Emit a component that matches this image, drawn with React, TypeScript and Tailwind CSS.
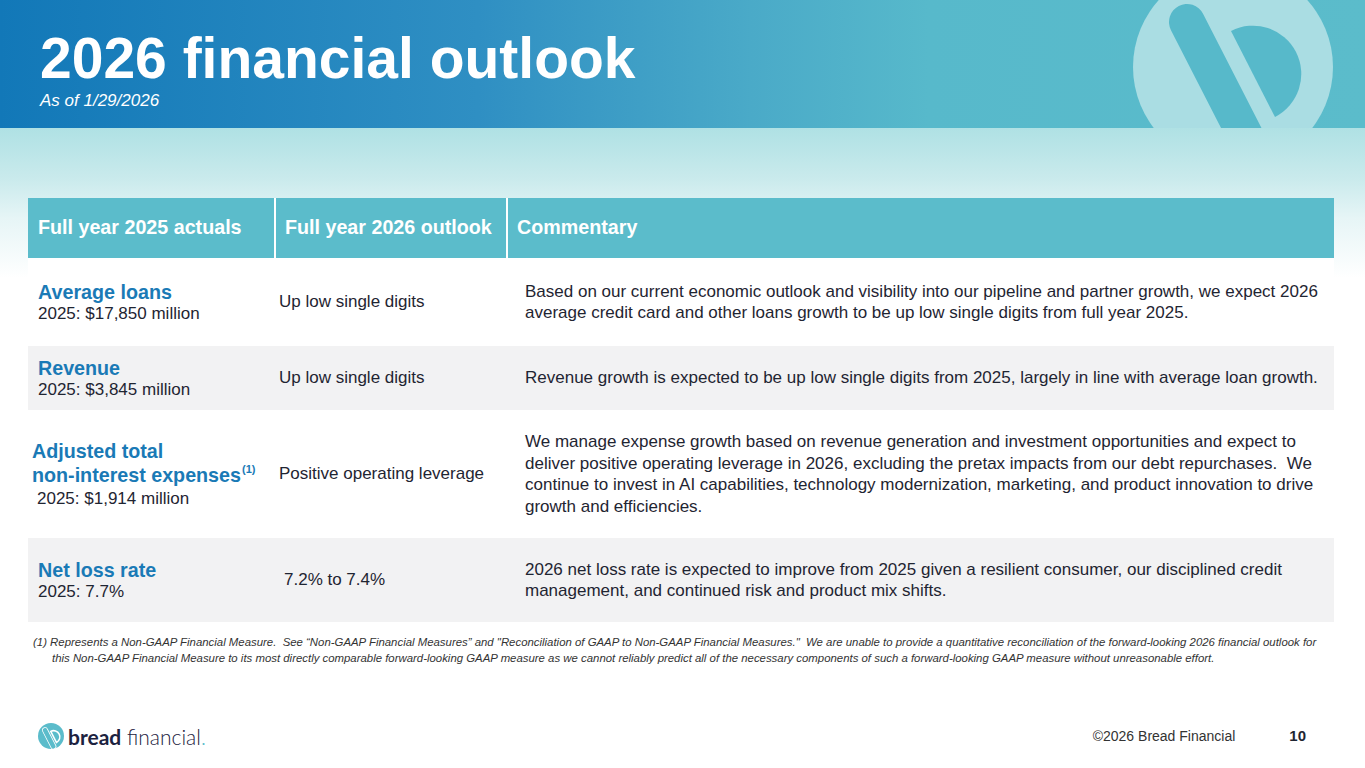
import React from "react";

const FONT = "font-['Liberation_Sans',Arial,sans-serif]";

function BreadMark({
  circle,
  shape,
  outline,
  className,
}: {
  circle: string;
  shape: string;
  outline?: string;
  className?: string;
}) {
  return (
    <svg viewBox="0 0 200 200" className={className}>
      <circle cx="100" cy="100" r="100" fill={circle} />
      <line
        x1="54"
        y1="55"
        x2="118"
        y2="180"
        stroke={outline ?? shape}
        strokeWidth={outline ? 46 : 36}
        strokeLinecap="round"
      />
      {outline && (
        <line
          x1="54"
          y1="55"
          x2="118"
          y2="180"
          stroke={shape}
          strokeWidth="34"
          strokeLinecap="round"
        />
      )}
      <path
        d="M 98 64 A 48 48 0 0 1 142 150 Z"
        fill={shape}
        stroke={outline ?? "none"}
        strokeWidth={outline ? 12 : 0}
      />
    </svg>
  );
}

type Row = {
  title: React.ReactNode;
  value: string;
  outlook: string;
  commentary: React.ReactNode;
  height: string;
  bg: string;
  titleIndent?: string;
  valueIndent?: string;
  outlookIndent?: string;
};

const rows: Row[] = [
  {
    title: "Average loans",
    value: "2025: $17,850 million",
    outlook: "Up low single digits",
    commentary: (
      <>
        Based on our current economic outlook and visibility into our pipeline and partner growth, we expect 2026
        <br />
        average credit card and other loans growth to be up low single digits from full year 2025.
      </>
    ),
    height: "h-[88px]",
    bg: "bg-white",
  },
  {
    title: "Revenue",
    value: "2025: $3,845 million",
    outlook: "Up low single digits",
    commentary: (
      <>
        Revenue growth is expected to be up low single digits from 2025, largely in line with average loan growth.
      </>
    ),
    height: "h-[64px]",
    bg: "bg-[#f2f2f3]",
  },
  {
    title: (
      <>
        Adjusted total
        <br />
        non-interest expenses
        <sup className="text-[11px] font-bold align-[4px] ml-[1px]">(1)</sup>
      </>
    ),
    value: "2025: $1,914 million",
    outlook: "Positive operating leverage",
    commentary: (
      <>
        We manage expense growth based on revenue generation and investment opportunities and expect to
        <br />
        deliver positive operating leverage in 2026, excluding the pretax impacts from our debt repurchases.&nbsp; We
        <br />
        continue to invest in AI capabilities, technology modernization, marketing, and product innovation to drive
        <br />
        growth and efficiencies.
      </>
    ),
    height: "h-[128px]",
    bg: "bg-white",
    titleIndent: "ml-[-6px] leading-[24px]",
    valueIndent: "ml-[-1px] mt-[1px]",
  },
  {
    title: "Net loss rate",
    value: "2025: 7.7%",
    outlook: "7.2% to 7.4%",
    commentary: (
      <>
        2026 net loss rate is expected to improve from 2025 given a resilient consumer, our disciplined credit
        <br />
        management, and continued risk and product mix shifts.
      </>
    ),
    height: "h-[84px]",
    bg: "bg-[#f2f2f3]",
    outlookIndent: "pl-[8px]",
  },
];

export default function App() {
  return (
    <div className={`relative w-[1365px] h-[768px] overflow-hidden bg-white ${FONT}`}>
      {/* Title band */}
      <header className="relative h-[128px] overflow-hidden bg-[linear-gradient(90deg,#1278b8_0%,#2f8fc3_35%,#4aaac8_55%,#57b9cb_68%,#5bbccb_100%)] pl-[40px] pt-[30px] text-white">
        <h1 className="text-[57px] leading-[57px] font-bold">2026 financial outlook</h1>
        <p className="mt-[4px] text-[17px] leading-[20px] italic">As of 1/29/2026</p>
        <BreadMark
          circle="#aadde3"
          shape="#57b9ca"
          className="absolute left-[1133px] top-[-33px] w-[200px] h-[200px]"
        />
      </header>

      {/* Table area */}
      <section className="bg-[linear-gradient(180deg,#afe1e4_0px,#c9eaec_50px,#e6f5f6_90px,#ffffff_150px)] pt-[70px] pl-[28px] pr-[31px]">
        <div className="flex h-[60px] bg-[#5bbccb] text-white text-[19.7px] font-bold">
          <div className="w-[248px] flex items-center pl-[10px] border-r-2 border-white">Full year 2025 actuals</div>
          <div className="w-[232px] flex items-center pl-[9px] border-r-2 border-white">Full year 2026 outlook</div>
          <div className="flex-1 flex items-center pl-[9px]">Commentary</div>
        </div>

        {rows.map((r, i) => (
          <div key={i} className={`flex ${r.height} ${r.bg} text-[#1f2532] text-[17px]`}>
            <div className="w-[248px] flex flex-col justify-center pl-[10px]">
              <div className={`text-[#1a7ab6] font-bold text-[19.7px] leading-[22px] ${r.titleIndent ?? ""}`}>
                {r.title}
              </div>
              <div className={`leading-[21px] ${r.valueIndent ?? ""}`}>{r.value}</div>
            </div>
            <div className={`w-[232px] flex items-center pl-[3px] ${r.outlookIndent ?? ""}`}>{r.outlook}</div>
            <div className="flex-1 flex items-center pl-[17px] leading-[21.5px] whitespace-nowrap">
              <div>{r.commentary}</div>
            </div>
          </div>
        ))}
      </section>

      {/* Footnote */}
      <div className="pl-[33px] pt-[12px] text-[11.4px] leading-[16px] italic text-[#333] whitespace-nowrap">
        (1) Represents a Non-GAAP Financial Measure.&nbsp; See “Non-GAAP Financial Measures” and "Reconciliation of GAAP to Non-GAAP Financial Measures."&nbsp; We are unable to provide a quantitative reconciliation of the forward-looking 2026 financial outlook for
        <br />
        <span className="pl-[19px]">
          this Non-GAAP Financial Measure to its most directly comparable forward-looking GAAP measure as we cannot reliably predict all of the necessary components of such a forward-looking GAAP measure without unreasonable effort.
        </span>
      </div>

      {/* Footer */}
      <footer className="absolute left-0 right-0 top-[720px] h-[32px] flex items-center pl-[38px] pr-[59px]">
        <div className="flex items-center gap-[3px]">
          <BreadMark circle="#5bbccb" shape="#5bbccb" outline="#ffffff" className="w-[26px] h-[26px]" />
          <span className="ml-[1px] font-['Lato',sans-serif] text-[21px] leading-none text-[#1c2240]">
            <span className="font-bold">bread</span>
            <span className="font-light"> financial</span>
            <span className="font-light text-[#5bbccb]">.</span>
          </span>
        </div>
        <div className="ml-auto flex items-center text-[#333]">
          <span className="text-[14px]">©2026 Bread Financial</span>
          <span className="ml-[54px] text-[15px] font-bold text-[#1f2532]">10</span>
        </div>
      </footer>
    </div>
  );
}
